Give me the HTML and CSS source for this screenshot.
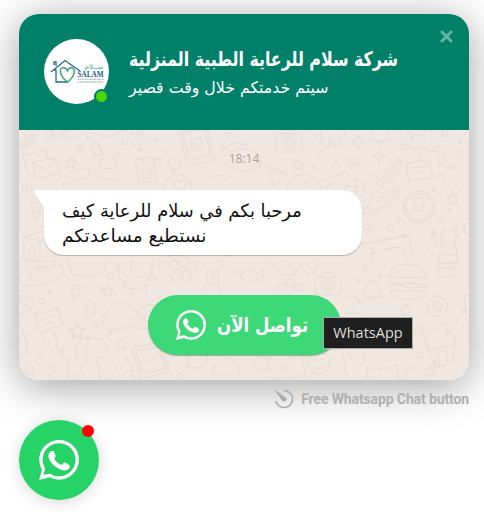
FILE: index.html
```html
<!DOCTYPE html>
<html lang="ar">
<head>
<meta charset="utf-8">
<title>WhatsApp Chat</title>
<link rel="stylesheet" href="styles.css">
</head>
<body>
<svg class="defs" width="0" height="0">
  <defs>
    <symbol id="wa" viewBox="0 0 24 24"><path fill="#fff" d="M.057 24l1.687-6.163a11.867 11.867 0 0 1-1.587-5.946C.16 5.335 5.495 0 12.05 0a11.817 11.817 0 0 1 8.413 3.488 11.824 11.824 0 0 1 3.48 8.414c-.003 6.557-5.338 11.892-11.893 11.892a11.9 11.9 0 0 1-5.688-1.448L.057 24zm6.597-3.807c1.676.995 3.276 1.591 5.392 1.592 5.448 0 9.886-4.434 9.889-9.885.002-5.462-4.415-9.89-9.881-9.892-5.452 0-9.887 4.434-9.889 9.884a9.86 9.86 0 0 0 1.51 5.26l-.999 3.648 3.978-.607z"/><path fill="#fff" d="M17.5 14.4c-.3-.15-1.75-.87-2.03-.97-.27-.1-.47-.15-.66.15-.2.3-.77.97-.94 1.16-.18.2-.35.23-.65.08-.3-.15-1.25-.46-2.39-1.48-.88-.79-1.48-1.76-1.65-2.06-.17-.3-.02-.46.13-.6.6-.6.85-.8.57-1.4L8.960 7.100c-.24-.58-.49-.5-.67-.51-.7-.03-1.100-.02-1.610.56-.3.3-1.040 1.020-1.040 2.480s1.060 2.880 1.210 3.070c.15.2 2.100 3.200 5.080 4.490 3.030 1.310 3.650 1.050 4.300.99.660-.06 1.760-.72 2.010-1.410.25-.7.25-1.290.17-1.420-.07-.120-.27-.2-.57-.35z"/></symbol>
    <path id="star" d="M0-6 1.800-2 6-1.600 2.900 1.300 3.800 5.500 0 3.400-3.800 5.500-2.900 1.300-6-1.600-1.800-2z"/>
    <path id="spark" d="M0-7Q1-1 7 0 1 1 0 7-1 1-7 0-1-1 0-7z"/>
    <path id="heart" d="M0 6C-9-1-6-6-3-6-1-6 0-3 0-3S1-6 3-6C7-6 8 0 0 6z"/>
    <path id="bolt" d="M-3-8H5L2-2H6L-4 8-1 1H-5z"/>
    <path id="pin" d="M0 7C-7-1-5-6 0-6S7-1 0 7zM-1.500-1a1.500 1.500 0 1 0 3 0 1.500 1.500 0 1 0-3 0"/>
    <path id="drop" d="M0-6C6 2 4 6 0 6S-6 2 0-6z"/>
    <path id="bell" d="M-11 7C-5 2-9-9 0-9S5 2 11 7zM-3 8Q0 13 3 8M-2-9Q0-14 2-9"/>
    <g id="camera"><rect x="-13" y="-8" width="26" height="18" rx="3"/><path d="M-6-8-4-12H4L6-8"/><circle cy="1" r="6"/><circle cy="1" r="3"/></g>
    <path id="note" d="M-13-7 10-10 14 7-6 10-10 13-11 8zM-7-2 6-4M-6 3 4 2"/>
    <g id="bits"><circle r="3"/><circle cx="15" cy="8" r="1.500"/><circle cx="-7" cy="13" r="2"/><circle cx="8" cy="-9" r="1.500"/></g>
  </defs>
</svg>
<main class="widget">
  <section class="card">
    <header class="head">
      <div class="avatar">
        <svg width="65" height="65" viewBox="0 0 65 65">
          <path d="M7 33 21 21.500 36 32M10 31H12V43H24M10 26V23H12V27" fill="none" stroke="#286795" stroke-width="1.300"/>
          <path d="M23.500 43C15 37 15 29 19 28.700c3-.2 4.500 3 4.500 3s1.500-3.500 4.500-3c4 .7 3 9-4.500 14.300z" fill="none" stroke="#38a875" stroke-width="1.500"/>
          <text x="50" y="30" class="logo-ar" textLength="19" lengthAdjust="spacingAndGlyphs">ســلام</text>
          <text x="46.500" y="37.500" class="logo-en" textLength="26" lengthAdjust="spacingAndGlyphs">SALAM</text>
          <path d="M33.500 40.300H59.500" stroke="#9aa9b3" stroke-dasharray="2 .6 1 .5"/>
          <path d="M33.500 43H59" stroke="#8a9ba8" stroke-dasharray="1.500 .7 2 .6"/>
        </svg>
        <i class="online"></i>
      </div>
      <div class="who">
        <h1><span class="fit title" dir="rtl">شركة سلام للرعاية الطبية المنزلية</span></h1>
        <p><span class="fit sub" dir="rtl">سيتم خدمتكم خلال وقت قصير</span></p>
      </div>
      <svg class="close" width="13" height="13" viewBox="0 0 13 13"><path d="M2 2 11 11M11 2 2 11"/></svg>
    </header>
    <div class="chat">
      <svg class="doodles" viewBox="19 130 450 250" width="450" height="250">
        <g transform="translate(28 142) rotate(-35)"><rect x="-9" y="-4" width="18" height="7" rx="3.500"/><path d="M6-1H-5Q-7 1-5 1H7"/></g>
        <path d="M51 130q3 10 10 5l6-5M63 130q1 12 11 8 12-4 12-8M92 133l18 4 15-7"/>
        <path d="M32 162 57 158 60 173 36 179zM32 162 46 170 57 158M28 175 23 155 46 150 48 158"/>
        <path d="M63 185C66 172 80 167 90 168L88 178Q75 179 63 185zM88 178 99 170 103 155 97 143M90 146q5-8 9-2l3 10q-8 4-12-8zM98 178q3-12 14-9 8 4 8 11zM106 152q12 5 12 20"/>
        <g transform="translate(197 146) rotate(-13)"><rect x="-14" y="-22" width="28" height="40" rx="3"/><rect x="-11" y="-16" width="22" height="28"/><circle cy="-2" r="6"/><path d="M-2-5q0 5 5 6"/></g>
        <g transform="translate(146 170) rotate(-10)"><rect x="-9" y="-12" width="18" height="24" rx="2"/><circle cy="-1" r="4"/><path d="M-5 8H5M-5-8H5"/></g>
        <circle cx="174" cy="164" r="6"/><path d="M174 170l-2 3h4z"/><circle cx="178" cy="188" r="13.500"/><use href="#heart" x="180" y="186"/>
        <use href="#heart" x="144" y="144"/><use href="#star" x="71" y="163"/><use href="#star" x="49" y="134"/>
        <circle cx="25" cy="189" r="7" stroke-dasharray="3 1.500" /><circle cx="25" cy="189" r="3"/>
        <path d="M30 204 43 201 37 221zM33 211l5 2"/>
        <path d="M24 237 43 231 55 235V262L24 260zM24 237 40 241 55 235M40 241V262"/><use href="#drop" x="32" y="252"/>
        <path d="M218 150l20-8 5 4 8-7M220 160q18-16 30-10 15 4 10 16-10 8-22 4-14-4-18-10M212 176q20-2 25 4"/>
        <use href="#camera" x="289" y="142"/><path d="M320 130q0 12 6 18 5 0 3-10 6 2 5 8 5 4 7-8 5-2 4-8M310 130q4 8 8 8"/>
        <use href="#spark" x="358" y="142"/><use href="#spark" x="379" y="156"/><use href="#bell" x="380" y="134"/>
        <path d="M399 130q5 20 18 18l20 4-6-8 8-10-8-4M407 130q10 12 20 0"/>
        <use href="#star" x="298" y="165"/><use href="#pin" x="353" y="164"/><path d="M267 165 287 174 274 186zM287 174l-14-3"/>
        <circle cx="304" cy="192" r="17.500"/><circle cx="307" cy="182" r="2"/><path d="M321 181l22-8q-4 9-17 14"/>
        <circle cx="355" cy="190" r="10"/><path d="M345 188q10-5 20 2M354 180q5 10 0 20"/>
        <path d="M373 173l8 8 10-17 3 2-13 21-10-11zM390 178l9-19 3 2-10 22-6-5"/>
        <use href="#note" x="419" y="170"/><use href="#bolt" x="442" y="162" transform="translate(88 32) scale(.8)"/>
        <path d="M363 210q5-1 9-12l3-7q8 3 13 1l10-5 2 4q-8 14-34 27zM366 214q18-5 32-25M376 200l6 3M380 196l6 3"/>
        <circle cx="419" cy="207" r="16"/><circle cx="419" cy="207" r="13.500"/><circle cx="419" cy="203" r="5"/><path d="M408 215q11-10 22 0"/>
        <use href="#star" x="453" y="199"/><use href="#pin" x="369" y="230"/><path d="M463 225l8-3M469 189l-4 3M463 225l2 8 5 1"/>
        <path d="M350 246 409 235 412 252 404 260M372 248l5 4-6 3zM381 250l23-4M400 252l3 3 3-7"/>
        <path d="M444 230h10l1 5h3v4h-3l3 24h-20l4-24h-2v-4h3zM442 246h14M441 255h16M428 228l8 6-6 4 8 5-10 6 6 4"/>
        <path d="M19 277q5-11 20-9l22-4q5 6-3 14-18 10-35 7-4-3-4-8zM30 280v-7l6 3 2-8 5 6 3-8 5 5"/>
        <path d="M68 260l4 14q10 4 20 2l12-5 3-11M119 268q-3 10 6 14l1 6q16 2 22-3v-6q8-5 2-14M131 285v11M145 284l2 11M132 260q-4 16 4 17h15l2-17"/>
        <g transform="translate(183 269)"><circle r="3"/><path d="M-3-3q-5-10 3-10t3 10q8-8 10-1t-10 5q10 7 3 11t-7-9q-3 12-9 8t5-11q-12-1-8-7t10 4"/></g>
        <path d="M207 270h11v14M207 270v12M202 292q0-7 8-8l8 2 3 7"/>
        <use href="#bolt" x="76" y="293"/><use href="#star" x="108" y="291"/><use href="#note" x="49" y="320" transform="rotate(-10 49 320)"/>
        <path d="M19 296q13-3 16 8-5 8-16 9M19 300l14 13M26 298v8"/><path d="M86 313v-8l9-2v8M84 313a2 2 0 1 0 3 0M92 312a2 2 0 1 0 3 0"/>
        <g transform="translate(77 331) scale(1.300)"><use href="#star"/></g><path d="M100 324q8-2 8-15 8-10 20-5 8 4 11 12l12 8q-3 5-12 5-6-6-16-1-15 5-23-4zM137 314q1-10 18-9"/><use href="#heart" x="140" y="320" transform="translate(28 64) scale(.8)"/>
        <path d="M58 337q-5 12 4 19l7 5-2 19M77 359q-3-10 3-19 10-4 22 0 8 6 5 16-10 3-16 0M88 341q-6 12 0 21-8 8-12-3M83 365l-6 15M97 359l3 21M94 345h1M104 347l2 3"/>
        <use href="#star" x="121" y="344"/><path d="M132 348l30-6 8 29-29 8zM136 351l24-5 6 22-23 6zM138 369l7-12 6 5 7-11 8 15M129 361l6 20"/>
        <use href="#heart" x="49" y="370"/><use href="#drop" x="30" y="369"/><path d="M19 325q7 5 8 28l-8 4"/>
        <path d="M187 355q0 13 10 13t10-13M212 374q3-18 18-16 10 8 10 16z"/>
        <path d="M242 272q8-5 16 1l5-5-1 15-5-4q-8 6-16-1zM263 263q10-1 18 11 12 5 17-4-5 2-8-5l-5-5M300 262q5 15 13 11 7-5 3-13"/>
        <use href="#camera" x="328" y="285"/><use href="#bell" x="373" y="290"/><circle cx="281" cy="286" r="4"/><circle cx="290" cy="283" r="4"/><circle cx="299" cy="287" r="4"/>
        <path d="M388 277q2-13 20-13 18 2 19 14zM387 281q10 5 20 2l22 2M389 287q10-4 20 1l18-1M390 291h37q-2 8-12 8h-15q-8 0-10-8zM398 270h1M407 268h1M415 272h1"/>
        <rect x="438" y="264" width="16" height="13" rx="2"/><path d="M439 268h14M441 264v-4M452 264v-4"/>
        <circle cx="437" cy="306" r="10"/><path d="M434 300l9 5-4 1 2 5-3 1-2-5-2 2z"/><use href="#star" x="406" y="310"/><use href="#star" x="419" y="330"/>
        <path d="M426 337q0-8 10-9l8-6 3 8q8 3 9 13l-28 8q-5-6-2-14zM429 350l6 17q11-1 18-5l2-20M437 348l3 18M445 345l3 18"/>
        <use href="#star" x="430" y="371"/><circle cx="319" cy="363" r="11"/><path d="M312 361q2-3 5 0M322 359h3M313 366q6 7 12-1M302 353l40-5 4 27M302 353l4 27"/>
        <path d="M368 380l-1-13 8 3q8-4 15-1l6-5 3 16M379 375h1M389 374h1M402 366q8 5 2 14M464 295l5-1M464 295l2 19"/>
        <path d="M262 353l3 6 7-1-5 6 4 7-8-3-5 5-1-7-6-3 6-3zM270 378h25l2-6M350 352q-2 5 2 8M365 352q-5 4 0 8M345 300q9-8 20 5"/>
        <use href="#bits" x="125" y="142"/><use href="#bits" x="80" y="147"/><use href="#bits" x="158" y="161"/><use href="#bits" x="230" y="136"/><use href="#bits" x="321" y="154"/><use href="#bits" x="404" y="147"/><use href="#bits" x="445" y="134"/><use href="#bits" x="441" y="177"/><use href="#bits" x="460" y="154"/><use href="#bits" x="390" y="228"/><use href="#bits" x="441" y="219"/><use href="#bits" x="110" y="276"/><use href="#bits" x="162" y="265"/><use href="#bits" x="95" y="325"/><use href="#bits" x="47" y="343"/><use href="#bits" x="118" y="368"/><use href="#bits" x="42" y="301"/><use href="#bits" x="365" y="268"/><use href="#bits" x="351" y="310"/><use href="#bits" x="420" y="355"/><use href="#bits" x="455" y="320"/><use href="#bits" x="285" y="368"/><use href="#bits" x="180" y="376"/><use href="#bits" x="220" y="264"/><use href="#bits" x="140" y="132"/>
      </svg>
      <time>18:14</time>
      <div class="bubble">
        <svg class="tail" width="11" height="20" viewBox="0 0 11 20"><path d="M11 0H2Q-.5 0 .7 2.500L8 14Q10 17 10 20H11z" fill="#fff"/></svg>
        <p><span class="fit line1" dir="rtl">مرحبا بكم في سلام للرعاية كيف</span></p>
        <p><span class="fit line2" dir="rtl">نستطيع مساعدتكم</span></p>
      </div>
      <a class="cta"><svg width="30" height="30"><use href="#wa"/></svg><span class="fit action" dir="rtl">تواصل الآن</span></a>
      <div class="tooltip">WhatsApp</div>
    </div>
  </section>
  <footer class="credit">
    <svg width="20" height="20" viewBox="0 0 20 20"><path d="M10 1.500A8.500 8.500 0 1 1 1.800 12" fill="none" stroke="#aaa" stroke-width="1.600"/><path d="M.5.500 12.300 9.200Q13 12 10.500 12.500 8.500 12.500 7 10z" fill="#aaa"/></svg>
    <span>Free Whatsapp Chat button</span>
  </footer>
  <a class="fab"><svg width="40" height="40"><use href="#wa"/></svg><i class="badge"></i></a>
</main>
</body>
</html>
```
FILE: styles.css
```css
* { box-sizing: border-box; }
body { margin: 0; background: #fff; font-family: "DejaVu Sans", sans-serif; overflow: hidden; }
.defs { position: absolute; }
h1, p { margin: 0; }
.widget { width: 484px; height: 512px; padding: 14px 15px 0 19px; }
.card { width: 450px; height: 366px; border-radius: 20px; overflow: hidden; box-shadow: 0 6px 42px rgba(0,0,0,.38); }
.head { height: 116px; background: #008069; padding: 25px 16px 0 25px; display: flex; color: #fff; }
.avatar { position: relative; flex: none; width: 65px; height: 65px; border-radius: 50%; background: #fff; }
.avatar svg { display: block; }
.logo-ar { font: 7px "DejaVu Sans"; fill: #4fb489; text-anchor: middle; }
.logo-en { font: bold 8px "Liberation Serif"; fill: #24618a; text-anchor: middle; }
.online { position: absolute; left: 50px; top: 50px; width: 15px; height: 15px; border-radius: 50%; background: #4ad504; border: 2px solid #008069; }
.who { flex: 1; min-width: 0; padding: 1px 0 0 20px; }
.who h1 { height: 34px; line-height: 30px; }
.who p { height: 28px; line-height: 28px; }
.fit { display: inline-block; white-space: nowrap; transform-origin: 0 50%; }
.title { font-size: 20px; font-weight: bold; transform: scaleX(.79); }
.sub { font-size: 16px; transform: scaleX(.985); }
.line1 { transform: scaleX(.988); }
.line2 { transform: scaleX(1.03); }
.action { font-size: 20px; transform: scaleX(.83); }
.close { flex: none; margin-top: -9px; }
.close path { stroke: #66b3a5; stroke-width: 3; stroke-linecap: round; }
.chat { position: relative; height: 250px; background: #efe7e0; display: flex; flex-direction: column; }
.doodles { position: absolute; left: 0; top: 0; fill: none; stroke: #e3dbd4; stroke-width: 1; }
time { position: relative; align-self: center; font: 12px/18px "Open Sans", sans-serif; color: #aaa39d; margin-top: 20px; }
.bubble { position: relative; width: 318px; height: 65px; margin: 22px 0 0 25px; padding: 8px 18px; background: #fff; border-radius: 0 20px 20px 20px; box-shadow: 0 1px 1px rgba(0,0,0,.25); color: #111; font-size: 18px; }
.bubble p { height: 25px; line-height: 25px; }
.tail { position: absolute; left: -10px; top: 0; }
.cta { position: relative; display: flex; align-items: center; gap: 11px; width: 193px; height: 60px; margin: 40px 0 0 129px; padding-left: 28px; border-radius: 30px; background: #3dd878; box-shadow: 0 1px 1px rgba(0,0,0,.3); color: #fff; font-size: 18px; font-weight: bold; }
.cta svg { flex: none; }
.tooltip { position: absolute; left: 304px; top: 187px; width: 90px; height: 32px; border: 1px solid #aaa; background: #1f1f1f; color: #ddd; font: 14.5px/29px "Open Sans", sans-serif; text-align: center; }
.credit { display: flex; align-items: center; justify-content: flex-end; gap: 7px; height: 20px; margin-top: 9px; width: 450px; font: bold 14px/20px Roboto, sans-serif; letter-spacing: -.12px; color: #b0b0b0; white-space: nowrap; }
.fab { position: relative; display: flex; align-items: center; justify-content: center; width: 80px; height: 80px; margin-top: 11px; border-radius: 50%; background: #25d366; box-shadow: 0 2px 16px rgba(0,0,0,.16); }
.badge { position: absolute; left: 63px; top: 5px; width: 12px; height: 12px; border-radius: 50%; background: #f00; }
```
